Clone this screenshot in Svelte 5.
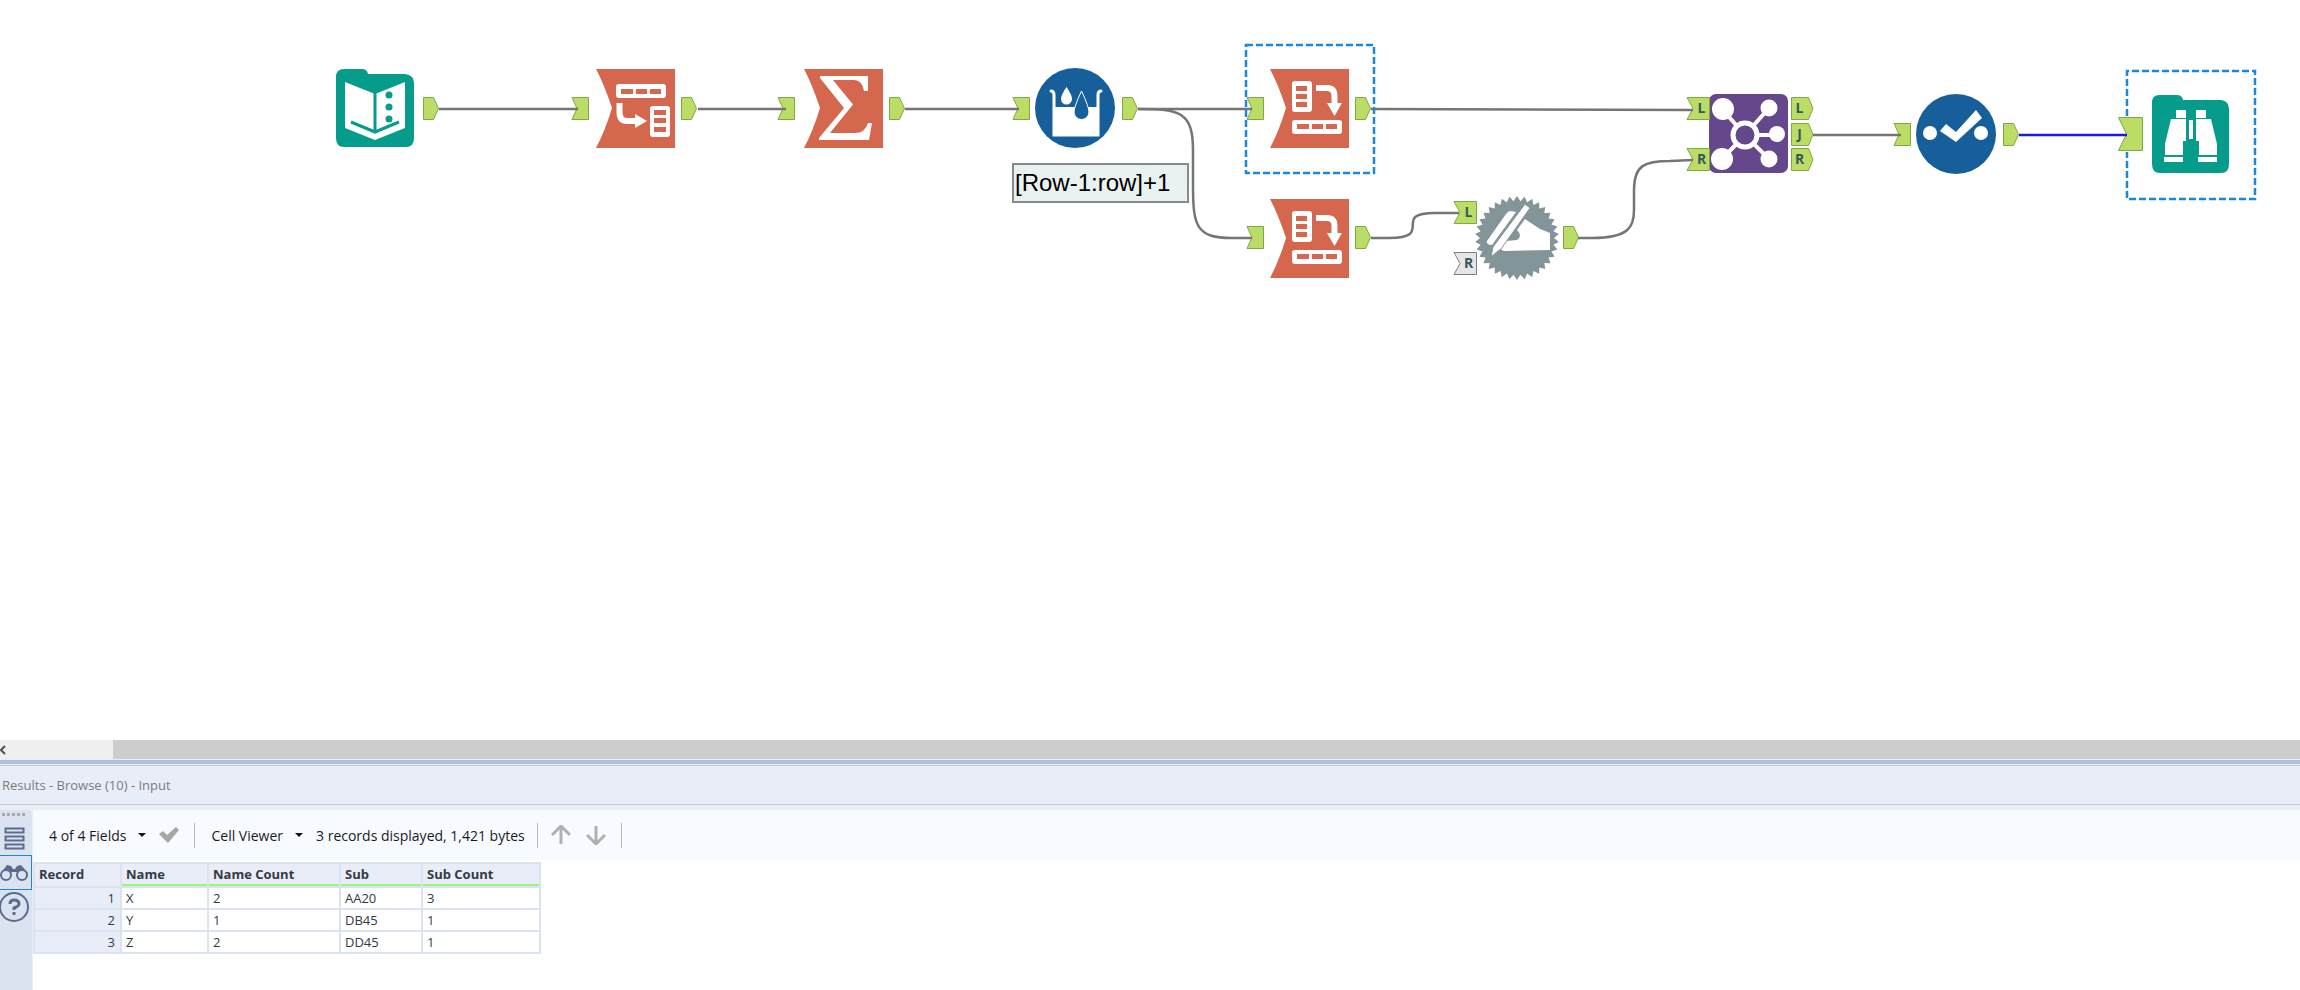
<script lang="ts">
	type Tool = { kind: string; label: string; x: number; y: number };
	type Port = { kind: 'in' | 'out' | 'wide'; x: number; y: number; text?: string; off?: boolean };

	const tools: Tool[] = [
		{ kind: 'input', label: 'Input Data', x: 336, y: 68 },
		{ kind: 'transpose', label: 'Transpose', x: 595, y: 68 },
		{ kind: 'summarize', label: 'Summarize', x: 803, y: 68 },
		{ kind: 'multirow', label: 'Multi-Row Formula', x: 1035, y: 68 },
		{ kind: 'crosstab', label: 'Cross Tab', x: 1269, y: 68 },
		{ kind: 'crosstab', label: 'Cross Tab', x: 1269, y: 198 },
		{ kind: 'macro', label: 'Dynamic Rename', x: 1477, y: 197 },
		{ kind: 'join', label: 'Join', x: 1708, y: 94 },
		{ kind: 'select', label: 'Select', x: 1916, y: 94 },
		{ kind: 'browse', label: 'Browse', x: 2151, y: 94 }
	];

	const ports: Port[] = [
		{ kind: 'out', x: 423, y: 97 },
		{ kind: 'in', x: 572, y: 97 },
		{ kind: 'out', x: 681, y: 97 },
		{ kind: 'in', x: 778, y: 97 },
		{ kind: 'out', x: 889, y: 97 },
		{ kind: 'in', x: 1013, y: 97 },
		{ kind: 'out', x: 1122, y: 97 },
		{ kind: 'in', x: 1247, y: 97 },
		{ kind: 'out', x: 1355, y: 97 },
		{ kind: 'in', x: 1247, y: 226 },
		{ kind: 'out', x: 1355, y: 226 },
		{ kind: 'in', x: 1454, y: 201, text: 'L' },
		{ kind: 'in', x: 1454, y: 252, text: 'R', off: true },
		{ kind: 'out', x: 1563, y: 226 },
		{ kind: 'in', x: 1687, y: 97, text: 'L' },
		{ kind: 'in', x: 1687, y: 148, text: 'R' },
		{ kind: 'out', x: 1791, y: 97, text: 'L' },
		{ kind: 'out', x: 1791, y: 123, text: 'J' },
		{ kind: 'out', x: 1791, y: 148, text: 'R' },
		{ kind: 'in', x: 1894, y: 123 },
		{ kind: 'out', x: 2003, y: 123 },
		{ kind: 'wide', x: 2118, y: 117 }
	];

	const wires = [
		'M439 109H578',
		'M698 109H786',
		'M905 109H1019',
		'M1138 109H1252',
		'M1138 109C1180 109 1193 112 1193 150V185C1193 226 1196 238 1232 238H1252',
		'M1371 109L1693 110',
		'M1371 238H1389C1436 238 1390 213 1435 213H1459',
		'M1578 238H1592C1630 238 1634 226 1634 210V190C1634 165 1645 161 1670 161L1693 160',
		'M1813 135H1901'
	];

	const fields = ['Name', 'Name Count', 'Sub', 'Sub Count'];
	const records = [
		['X', '2', 'AA20', '3'],
		['Y', '1', 'DB45', '1'],
		['Z', '2', 'DD45', '1']
	];

	// saw-tooth rim of the macro badge
	const teeth = 34;
	const rim = Array.from({ length: teeth * 2 }, (_, i) => {
		const r = i % 2 ? 37 : 42;
		const a = (i * Math.PI) / teeth - Math.PI / 2;
		return `${(40 + r * Math.cos(a)).toFixed(1)},${(41 + r * Math.sin(a)).toFixed(1)}`;
	}).join(' ');

	function portShape(port: Port) {
		if (port.kind === 'wide') return 'M.5 .5H24.5V33.5H.5L8.5 17Z';
		if (port.kind === 'in') return port.text ? 'M0 .5H22.5V22.5H0L6 11.5Z' : 'M0 .5H16.5V22.5H0L5 11.5Z';
		return port.text ? 'M.5 .5H17.5L22 11.5L17.5 22.5H.5Z' : 'M.5 .5H10.5L15.5 11.5L10.5 22.5H.5Z';
	}
</script>

<div class="designer">
	<main class="canvas">
		{#each tools as tool}
			<svg
				class="tool"
				style="left: {tool.x}px; top: {tool.y}px"
				viewBox="0 0 80 80"
				role="img"
				aria-label={tool.label}
			>
				{#if tool.kind === 'input'}
					<path class="teal" d="M8 1H26Q31 1 32 6H69Q78 7 78 15V70Q78 79 70 79H8Q0 79 0 70V9Q0 1 8 1Z" />
					<path class="glyph" d="M9 14L39 26L69 14V60L39 72L9 60Z" />
					<path class="teal-line" d="M39 25V65M15 54L39 64L63 54" stroke-width="3" />
					<g class="teal"><circle cx="53" cy="27" r="3.5" /><circle cx="53" cy="39" r="3.5" /><circle cx="53" cy="51" r="3.5" /></g>
				{:else if tool.kind === 'transpose'}
					<path class="orange" d="M1 1H80V80H1Q10 63 17 40Q9 16 1 1Z" />
					<rect class="glyph" x="21" y="16" width="50" height="14" rx="3" />
					<path class="orange" d="M26 21H38V26H26ZM41 21H52V26H41ZM55 21H66V26H55Z" />
					<path class="glyph-line" d="M24.5 35V44Q24.5 53 32 53H43" stroke-width="6" />
					<path class="glyph" d="M40 46L52 53L40 60Z" />
					<rect class="glyph" x="55" y="38" width="20" height="31" rx="3" />
					<path class="orange" d="M59 42H71V47H59ZM59 50H71V55H59ZM59 59H71V64H59Z" />
				{:else if tool.kind === 'summarize'}
					<path class="orange" d="M1 1H80V80H1Q10 63 17 40Q9 16 1 1Z" />
					<path class="glyph" d="M17 8H65V23H61Q59 12 51 12H30L50 36.5L27 65H52Q62 65 65 55H69L66 72H16V70L41 40L17 10Z" />
				{:else if tool.kind === 'multirow'}
					<circle class="blue" cx="40" cy="40" r="40" />
					<path class="glyph-line" d="M16 23Q19 23 19 27V67H63V27Q63 23 66 23" stroke-width="3" stroke-linecap="round" />
					<path class="glyph" d="M19 39H64V67H19Z" />
					<path class="glyph" d="M31.5 19Q37 27 37 31A5.5 5.5 0 0 1 26 31Q26 27 31.5 19Z" />
					<path class="blue outline" d="M46.5 23Q54 39 54 44A7.5 7.5 0 0 1 39 44Q39 39 46.5 23Z" />
				{:else if tool.kind === 'crosstab'}
					<path class="orange" d="M1 1H80V80H1Q10 63 17 40Q9 16 1 1Z" />
					<rect class="glyph" x="23" y="13" width="20" height="31" rx="3" />
					<path class="orange" d="M27 18H38V23H27ZM27 26H38V31H27ZM27 34H38V39H27Z" />
					<path class="glyph-line" d="M47 20H58Q65.5 20 65.5 28V36" stroke-width="6" />
					<path class="glyph" d="M58 35H73L65.5 48Z" />
					<rect class="glyph" x="23" y="52" width="50" height="14" rx="3" />
					<path class="orange" d="M28 56H40V61H28ZM43 56H54V61H43ZM57 56H68V61H57Z" />
				{:else if tool.kind === 'macro'}
					<polygon class="gray" points={rim} />
					<path class="glyph" d="M10 44L29 17Q31 14 34 14L39 15L15 48Q9 48 10 44Z" />
					<path class="glyph" d="M40 33L48 22L63 32L73 36V53L27 54Q20 51 22 47Q24 44 29 44L40 43Q46 39 40 33Z" />
					<path class="glyph gray-edge" d="M48 7L53 11L24 52L21 54L14 60L16 50Z" />
				{:else if tool.kind === 'join'}
					<rect class="purple" x="1" y="0" width="79" height="79" rx="7" />
					<path class="glyph-line" d="M14 15L37 41L61 14M14 65L37 41L61 65M37 41H69" stroke-width="4" />
					<g class="glyph">
						<circle cx="15" cy="15" r="11" />
						<circle cx="14" cy="65" r="11" />
						<circle cx="61" cy="14" r="8.5" />
						<circle cx="61" cy="65" r="8.5" />
						<circle cx="69" cy="40" r="8" />
					</g>
					<circle class="purple ring" cx="37" cy="41" r="12" />
				{:else if tool.kind === 'select'}
					<circle class="blue" cx="40" cy="40" r="40" />
					<g class="glyph"><circle cx="14" cy="39" r="7" /><circle cx="65" cy="39" r="7" /></g>
					<path class="glyph" d="M24 37L30 30L40 38L60 16L66 24L40 48Z" />
				{:else}
					<path class="teal" d="M8 1H26Q31 1 32 6H70Q78 7 78 15V70Q78 79 70 79H9Q1 79 1 70V9Q1 1 8 1Z" />
					<path class="glyph" d="M25 16H35V24H25ZM45 16H55V24H45ZM20 25H35V47H32V61H14V50ZM45 25H60L66 50V61H48V47H45ZM38 26H42V45H38ZM13 63H32V68H13ZM47 63H66V68H47Z" />
				{/if}
			</svg>
		{/each}

		{#each ports as port}
			<span class="port" class:off={port.off} style="left: {port.x}px; top: {port.y}px">
				<svg width="25" height="34" aria-hidden="true"><path d={portShape(port)} /></svg>
				{#if port.text}
					<b class:before={port.kind === 'in'}>{port.text}</b>
				{/if}
			</span>
		{/each}

		<svg class="wires" aria-hidden="true">
			{#each wires as wire}
				<path d={wire} />
			{/each}
			<path class="active" d="M2019 135H2127" />
			<rect class="selection" x="1246" y="45" width="128" height="128" />
			<path class="selection" d="M2127 116V71H2255V199H2127V152" />
		</svg>

		<div class="annotation">[Row-1:row]+1</div>
	</main>

	<div class="scrollbar">
		<button class="scroll-left" aria-label="Scroll left">
			<svg width="6" height="10" viewBox="0 0 6 10"><path d="M5 1L1 5L5 9" /></svg>
		</button>
		<div class="thumb"></div>
	</div>

	<section class="results">
		<h2>Results - Browse (10) - Input</h2>
		<div class="body">
			<nav class="rail">
				<div class="grip"></div>
				<button class="rail-button" aria-label="Messages">
					<svg width="32" height="34" viewBox="0 0 32 34">
						<path d="M5.5 7.5H23.5V11.5H5.5ZM5.5 15.5H23.5V19.5H5.5ZM5.5 23.5H23.5V27.5H5.5Z" />
					</svg>
				</button>
				<button class="rail-button active" aria-label="Browse data">
					<svg width="30" height="32" viewBox="0 0 30 32">
						<path class="solid" d="M1 16L7 8L11 9L13 12H15L17 9L21 8L28 16L24 21L17 15H12L5 21Z" />
						<circle class="lens" cx="6" cy="18" r="5" />
						<circle class="lens" cx="22" cy="18" r="5" />
					</svg>
				</button>
				<button class="rail-button" aria-label="Help">
					<svg width="32" height="34" viewBox="0 0 32 34">
						<circle cx="14" cy="17" r="14" />
						<path class="question" d="M10 14Q10 10 14 10Q19 10 19 14Q19 16 14 18V20M14 22V25" />
					</svg>
				</button>
			</nav>

			<div class="content">
				<div class="toolbar">
					<button class="menu">4 of 4 Fields <i class="caret"></i></button>
					<button class="icon check" aria-label="Apply">
						<svg width="20" height="16" viewBox="0 0 20 16"><path d="M0 7L4 4L8 8L17 0L20 3L9 16Z" /></svg>
					</button>
					<span class="divider"></span>
					<button class="menu">Cell Viewer <i class="caret"></i></button>
					<span class="status">3 records displayed, 1,421 bytes</span>
					<span class="divider"></span>
					<button class="icon arrow" aria-label="Previous">
						<svg width="20" height="20" viewBox="0 0 20 20"><path d="M10 19V2M1 10L10 1L19 10" /></svg>
					</button>
					<button class="icon arrow" aria-label="Next">
						<svg width="20" height="20" viewBox="0 0 20 20"><path d="M10 1V18M1 10L10 19L19 10" /></svg>
					</button>
					<span class="divider"></span>
				</div>

				<table>
					<colgroup>
						<col class="w-record" />
						<col class="w-name" />
						<col class="w-name-count" />
						<col class="w-sub" />
						<col class="w-sub-count" />
					</colgroup>
					<thead>
						<tr>
							<th scope="col">Record</th>
							{#each fields as field}
								<th scope="col" class="field">{field}</th>
							{/each}
						</tr>
					</thead>
					<tbody>
						{#each records as record, i}
							<tr>
								<th scope="row">{i + 1}</th>
								{#each record as value}
									<td>{value}</td>
								{/each}
							</tr>
						{/each}
					</tbody>
				</table>
			</div>
		</div>
	</section>
</div>

<style>
	:global(body) {
		margin: 0;
		background: #fff;
	}

	.designer {
		display: flex;
		flex-direction: column;
		min-height: 100vh;
		overflow: hidden;
		font-family: 'Open Sans', 'Noto Sans', sans-serif;
		font-size: 14px;
		color: #1b1b1f;
	}

	button {
		padding: 0;
		border: 0;
		background: none;
		font: inherit;
		color: inherit;
	}

	/* workflow canvas */
	.canvas {
		position: relative;
		flex: 1;
		overflow: hidden;
	}

	.tool {
		position: absolute;
		width: 80px;
		height: 80px;
		overflow: visible;
	}

	.teal { fill: #069c8c; }
	.orange { fill: #d4674e; }
	.blue { fill: #175f9a; }
	.gray { fill: #839599; }
	.purple { fill: #65478c; }
	.glyph { fill: #fff; }

	.glyph-line,
	.teal-line {
		fill: none;
		stroke: #fff;
	}

	.teal-line { stroke: #069c8c; }
	.gray-edge { stroke: #839599; }

	.outline {
		stroke: #fff;
		stroke-width: 1;
	}

	.ring {
		stroke: #fff;
		stroke-width: 5;
	}

	.port {
		position: absolute;
		width: 23px;
		height: 23px;
	}

	.port svg {
		display: block;
		overflow: visible;
	}

	.port path {
		fill: #bbdc65;
		stroke: #7fa848;
	}

	.port b {
		position: absolute;
		top: 0;
		left: 0;
		width: 17px;
		font-family: 'Open Sans', sans-serif;
		font-size: 14px;
		line-height: 22px;
		text-align: center;
		color: #35595a;
	}

	.port b.before {
		left: 6px;
	}

	.port.off path {
		fill: #e6e6e6;
		stroke: #808080;
	}

	.wires {
		position: absolute;
		inset: 0;
		width: 100%;
		height: 100%;
		fill: none;
		stroke: #757575;
		stroke-width: 2.5;
	}

	.wires .active {
		stroke: #1a1ae6;
	}

	.wires .selection {
		stroke: #1a86dc;
		stroke-dasharray: 7 3;
	}

	.annotation {
		position: absolute;
		left: 1012px;
		top: 163px;
		box-sizing: border-box;
		width: 177px;
		height: 40px;
		padding: 0 1px;
		border: 2px solid #868a8a;
		background: #eaf1f1;
		font-family: 'Liberation Sans', sans-serif;
		font-size: 24px;
		line-height: 36px;
		white-space: nowrap;
		color: #000;
	}

	.scrollbar {
		display: flex;
		height: 19px;
		border-bottom: 1px solid #e9edf8;
		background: #f0f0f0;
	}

	.scroll-left {
		display: flex;
		align-items: center;
		width: 113px;
	}

	.scroll-left path {
		fill: none;
		stroke: #505050;
		stroke-width: 2;
	}

	.thumb {
		flex: 1;
		background: #cdcdcd;
	}

	/* results window */
	.results {
		border-top: 4px solid #afbfe0;
		background: #e9edf8;
	}

	h2 {
		margin: 1px 0 0;
		padding-left: 2px;
		border-top: 1px solid #c8c8c8;
		border-bottom: 1px solid #c8c8c8;
		font-size: 13px;
		font-weight: 400;
		line-height: 38px;
		color: #7b7b7f;
	}

	.body {
		display: flex;
		min-height: 180px;
		padding-top: 5px;
	}

	.rail {
		display: flex;
		flex-direction: column;
		width: 32px;
		border-radius: 0 5px 0 0;
		background: #dbe2f0;
	}

	.grip {
		width: 23px;
		height: 3px;
		margin: 3px 0 5px 2px;
		background: repeating-linear-gradient(90deg, #a9a9ad 0 3px, transparent 3px 5px);
	}

	.rail-button {
		height: 34px;
	}

	.rail-button svg {
		display: block;
		fill: none;
		stroke: #5c6b8e;
		stroke-width: 2;
	}

	.rail-button.active {
		box-sizing: border-box;
		height: 35px;
		border: 1px solid #1a86dc;
		border-left: 0;
	}

	.rail-button .solid {
		fill: #5c6b8e;
		stroke: none;
	}

	.rail-button .lens {
		fill: #dbe2f0;
	}

	.question {
		stroke-width: 3;
	}

	.content {
		flex: 1;
		margin-left: 1px;
		background: #fff;
	}

	.toolbar {
		display: flex;
		align-items: center;
		height: 50px;
		padding-left: 16px;
		background: #f7faff;
		white-space: nowrap;
	}

	.menu {
		display: flex;
		align-items: center;
		gap: 12px;
	}

	.caret {
		border: 4px solid transparent;
		border-top-color: #111;
		border-bottom: 0;
	}

	.icon {
		display: flex;
		fill: #a6a6a6;
	}

	.check {
		margin: 0 15px 0 13px;
	}

	.divider {
		width: 1px;
		height: 25px;
		background: #b8b8b8;
	}

	.divider + .menu {
		margin: 0 13px 0 16px;
	}

	.status {
		margin-right: 12px;
	}

	.arrow {
		margin: 0 2px 0 13px;
		fill: none;
		stroke: #b0b0b0;
		stroke-width: 3;
	}

	.arrow + .divider {
		margin-left: 13px;
	}

	table {
		width: 506px;
		border-collapse: collapse;
		table-layout: fixed;
		margin-top: 2px;
		font-size: 13px;
		line-height: 16px;
		color: #333a45;
	}

	.w-record { width: 87px; }
	.w-name { width: 87px; }
	.w-name-count { width: 132px; }
	.w-sub { width: 82px; }
	.w-sub-count { width: 118px; }

	th,
	td {
		box-sizing: border-box;
		height: 22px;
		padding: 2px 4px;
		border: 2px solid #dbe2f0;
		text-align: left;
	}

	th {
		background: #e9edf8;
	}

	thead th {
		padding: 2px 4px 4px;
	}

	th.field {
		box-shadow: inset 0 -2px #97f67c;
	}

	tbody th {
		padding-right: 5px;
		font-weight: 400;
		text-align: right;
	}
</style>
